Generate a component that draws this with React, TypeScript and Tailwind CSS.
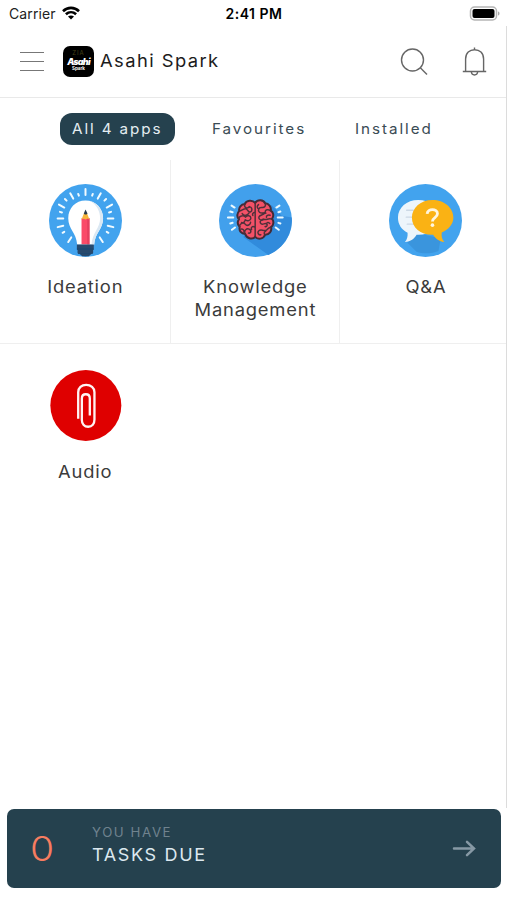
const IdeationIcon = () => (
  <svg className="h-[73px] w-[73px]" viewBox="27 27 220 220">
    <circle cx="137" cy="137" r="110" fill="#42a3ee" />
    <g stroke="#f2fbff" strokeWidth="6" strokeLinecap="round">
      <path d="M137 42v18M91 55l9 16M183 55l-9 16M115 57l2 5M159 57l-2 5M57 89l16 9M217 89l-16 9M75 72l5 5M199 72l-5 5M60 111l6 2M214 111l-6 2M53 131h17M221 131h-17M53 157l17-4M221 157l-17-4M68 174l5-3M206 174l-5-3M85 202l9-14M189 202l-9-14" />
    </g>
    <path d="M137 77c-30 0-52 23-52 53 0 33 24 42 27 80h51c3-38 27-47 27-80 0-30-23-53-53-53z" fill="#fff" />
    <path d="M152 79c23 7 38 27 38 51 0 33-24 42-27 80h-8c3-38 26-50 26-80 0-21-11-41-29-51z" fill="#dbe8f3" />
    <path d="M125 130h24v79h-24z" fill="#fa4b68" />
    <path d="M142 130h7v79h-7z" fill="#e5405f" />
    <path d="M125 134l8-20h8l8 20-6-3-6 3-6-3z" fill="#f6b53c" />
    <path d="M132 116l5-12 6 12-3 3h-5z" fill="#263b4f" />
    <path d="M111 209h51v12h-51zM113 225h47v10h-47zM119 237h36l-8 8h-20z" fill="#27496d" />
    <path d="M111 221h51v4h-51zM114 235h45v2h-45z" fill="#163150" />
  </svg>
)

const BrainIcon = () => (
  <svg className="h-[73px] w-[73px]" viewBox="27 27 220 220">
    <circle cx="137" cy="137" r="110" fill="#42a0ec" />
    <path d="M185 90l31 33 30 5c4 49-27 95-70 113l-76-54z" fill="#318bdc" />
    <g stroke="#edfaff" strokeWidth="6" strokeLinecap="round">
      <path d="M65 92l9 6M61 110l7 2M54 128h16M61 146l7-2M66 165l9-7M209 92l-9 6M212 110l-6 2M219 128h-15M212 146l-6-2M207 165l-9-7" />
    </g>
    <path
      d="M136 84c-8-10-27-8-31 3-12 1-19 11-17 21-7 7-8 18-1 25-5 8-4 17 2 23-2 12 5 21 17 22 5 15 24 17 30 8 7 9 25 8 30-6 13 0 21-11 18-23 8-6 9-18 3-25 6-9 4-20-4-25 2-12-6-21-17-22-5-11-23-12-30-1z"
      fill="#f35167"
      stroke="#442b37"
      strokeWidth="6"
    />
    <g fill="none" stroke="#50303a" strokeWidth="4.500" strokeLinecap="round" strokeLinejoin="round">
      <path d="M136 84v102M105 87c-4 12 8 16 13 8M88 108c9 1 13-8 20-6s7 12 14 9 4-18-4-14M87 133c-1-11 15-13 20-6 5-7 16-5 16 3s-12 10-17 5M89 156c-1-10 12-15 17-8 6 8 17 1 16-6M106 178c-5-10 4-19 12-15 8 4 5 14-2 12M97 116c5 9 16 6 20-1M95 143c5 2 8 0 10-5M93 163c6-1 11 3 9 9M136 112c-7 0-9 6-7 10M136 158c-9-6-13 0-11 6" />
      <path d="M166 85c4 8-2 14-10 13-10-1-13 9-7 14 6 6 14-1 19 3M183 108c-8-6-17-4-17 4 0 9-17 6-19 15-1 8 9 12 15 6M187 133c-11-5-16 3-22 1-8-3-17 5-13 11 5 8 13-2 18 2 5 3 1 10-4 8M184 157c-10 0-10 9-17 10-9 1-14-5-20 1-6 5-1 14 6 12M166 180c-5-3-3-9 2-11M181 121c-6-2-12 1-11 6M146 89c-4 3-5 8-2 11M180 146c-3-4-7-4-9-1" />
    </g>
  </svg>
)

const QuestionIcon = () => (
  <svg className="h-[73px] w-[73px]" viewBox="27 27 220 220">
    <circle cx="137" cy="137" r="110" fill="#42a3ee" />
    <path d="M82 203l35-27 66 15-7 38c-11 5-24 7-37 7-10 0-20-1-29-5z" fill="#3a95dd" />
    <path d="M115 75c-35 0-61 23-61 53 0 21 11 37 29 46 1 12-2 21-8 28 18-2 28-10 35-22 37 3 66-21 66-52 0-30-26-53-61-53z" fill="#edf5fb" />
    <path d="M80 106h20M79 127h19M82 148h21" stroke="#cbd8e5" strokeWidth="4" strokeLinecap="round" />
    <path d="M158 75c-35 0-62 23-62 53 0 32 29 54 64 52 8 13 18 20 34 22-7-8-10-18-8-29 21-9 35-25 35-45 0-30-28-53-63-53z" fill="#fab214" />
    <path d="M142 117c1-17 31-17 31 0 0 12-15 11-15 23" fill="none" stroke="#fff6df" strokeWidth="8.500" />
    <circle cx="158" cy="151" r="5.500" fill="#fff6df" />
  </svg>
)

const AudioIcon = () => (
  <svg className="h-[73px] w-[73px]" viewBox="27 27 220 220">
    <circle cx="138" cy="137" r="107" fill="#df0000" />
    <path
      d="M115 177V97c0-13 10-22 24-22s25 9 25 22v82c0 13-7 22-19 22-11 0-19-8-19-20v-65c0-9 5-13 12-13s12 4 12 13v51"
      fill="none"
      stroke="#fff3f3"
      strokeWidth="7"
    />
  </svg>
)

const StatusBar = () => (
  <div className="flex h-[26px] items-center justify-between pt-[1px] pr-[7px] pl-[9px] text-[14px] text-black">
    <div className="flex w-[150px] items-center gap-[6px]">
      <span className="tracking-[0.100px] text-[#222]">Carrier</span>
      <svg className="mb-[2px] h-[14px] w-[18px]" viewBox="0 0 18 14">
        <g fill="none" stroke="#000" strokeWidth="2.600">
          <path d="M1 5.200c4.600-4.400 11.400-4.400 16 0M3.900 8.300c3-2.800 7.200-2.800 10.200 0" />
        </g>
        <path d="M6 10.500c1.800-1.500 4.200-1.500 6 0l-3 3z" />
      </svg>
    </div>
    <span className="-ml-[1px] text-[14px] font-semibold tracking-[0.500px]">2:41 PM</span>
    <div className="flex w-[150px] justify-end">
      <svg className="mb-[1px] h-[15px] w-[31px]" viewBox="0 0 31 15">
        <rect x="1.500" y="1" width="26" height="13" rx="4" fill="#fff" stroke="#b5b5b5" strokeWidth="1.500" />
        <rect x="3.500" y="3" width="22" height="9" rx="2" />
        <path d="M29 5.500c2 .5 2 3.500 0 4z" fill="#aaa" />
      </svg>
    </div>
  </div>
)

const Header = () => (
  <div className="flex h-[72px] items-center border-b border-[#e9e9e9] pl-5">
    <button className="flex w-6 flex-col gap-[7.500px]">
      <span className="h-[1.500px] w-6 bg-[#777]" />
      <span className="h-[1.500px] w-6 bg-[#777]" />
      <span className="h-[1.500px] w-6 bg-[#777]" />
    </button>
    <div className="ml-[19px] flex h-[31px] w-[31px] flex-col items-center rounded-[7px] bg-black pt-[4px] text-white">
      <span className="text-[6px] leading-[6px] tracking-[1px] text-[#454016]">ZIA</span>
      <span className="mt-[1px] text-[9px] leading-[9px] font-black tracking-[-0.800px] italic">Asahi</span>
      <span className="text-[4.500px] leading-[6px] font-bold">Spark</span>
    </div>
    <h1 className="ml-[6px] origin-left scale-x-105 text-[17.500px] tracking-[1.350px] text-[#1c1c1c]">Asahi Spark</h1>
    <div className="ml-auto flex items-center gap-[34px] pr-[20px]">
      <svg className="h-[28px] w-[28px]" viewBox="0 0 28 28" fill="none" stroke="#666" strokeWidth="1.400">
        <circle cx="12.500" cy="12" r="11" />
        <path d="M20.300 19.800l6.700 6.700" />
      </svg>
      <svg className="h-[29px] w-[25px]" viewBox="0 0 25 29" fill="none" stroke="#666" strokeWidth="1.400">
        <path d="M.8 24.500h23.400M3.600 24.500V12c0-6 4-9.300 9-9.300s9 3.300 9 9.300v12.500M12.500.5v2.200M9.300 25c.6 4 5.800 4 6.400 0" />
      </svg>
    </div>
  </div>
)

const App = () => {
  return (
    <div className="relative flex h-[900px] w-[507px] flex-col overflow-hidden bg-white font-['Inter',sans-serif]">
      <StatusBar />
      <Header />
      <div className="flex h-[62px] items-center pl-[60px] text-[14.500px] text-[#3a4c55]">
        <button className="h-8 w-[115px] rounded-[12px] bg-[#25414e] pl-3 text-left whitespace-nowrap text-[#e4edf1]">
          <span className="block origin-left scale-x-105 tracking-[1.800px]">All 4 apps</span>
        </button>
        <button className="ml-[37px] w-[143px] origin-left scale-x-105 text-left tracking-[1.850px]">Favourites</button>
        <button className="origin-left scale-x-105 text-left tracking-[1.850px]">Installed</button>
      </div>
      <div className="grid grid-cols-[171px_169px_171px] text-center text-[17px] leading-[23px] tracking-[0.750px] text-[#3b3b3b]">
        <div className="flex h-[184px] flex-col items-center border-r border-b border-[#efefef] pt-6">
          <IdeationIcon />
          <p className="mt-[19px] scale-x-108">Ideation</p>
        </div>
        <div className="flex h-[184px] flex-col items-center border-r border-b border-[#efefef] pt-6">
          <BrainIcon />
          <p className="mt-[19px] scale-x-108">Knowledge<br />Management</p>
        </div>
        <div className="flex h-[184px] flex-col items-center border-b border-[#efefef] pt-6">
          <QuestionIcon />
          <p className="mt-[19px] scale-x-108">Q&amp;A</p>
        </div>
        <div className="flex flex-col items-center pt-[25px]">
          <AudioIcon />
          <p className="mt-[19px] scale-x-108">Audio</p>
        </div>
      </div>
      <div className="mx-[7px] mt-auto mr-[6px] mb-3 flex h-[79px] items-center rounded-[7px] bg-[#25414e]">
        <span className="ml-[23px] w-[62px] origin-left scale-x-115 text-[34px] font-light text-[#f77c60]">0</span>
        <div className="origin-left scale-x-106">
          <p className="text-[12.500px] leading-[16px] tracking-[1.500px] text-[#70838e]">YOU HAVE</p>
          <p className="mt-[2px] mb-[5px] text-[17px] leading-[24px] tracking-[1.550px] text-[#dce8ef]">TASKS DUE</p>
        </div>
        <svg className="mr-[25px] ml-auto h-[17px] w-[24px]" viewBox="0 0 24 17" fill="none" stroke="#8799a5" strokeWidth="2.500" strokeLinecap="round">
          <path d="M2 8.500h20M15 1.800l7 6.700-7 6.700" />
        </svg>
      </div>
      {/* right edge line */}
      <div className="absolute top-[26px] right-0 h-[782px] w-px bg-[#dcdcdc]" />
    </div>
  )
}

export default App
